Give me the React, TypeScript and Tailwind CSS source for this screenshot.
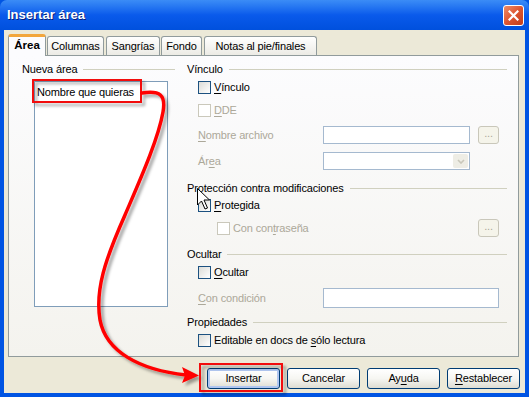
import React from "react";
import { clsx } from "clsx";

function U({ children }: { children: React.ReactNode }) {
  return <span className="underline decoration-1 underline-offset-[2px]">{children}</span>;
}

function Check({ disabled }: { disabled?: boolean }) {
  return (
    <span
      className={clsx(
        "size-[13px] shrink-0 border",
        disabled ? "border-[#cac8bb] bg-white" : "border-[#1c5180] bg-gradient-to-br from-[#dcdcd7] to-white"
      )}
    />
  );
}

function Heading({ children, className }: { children: React.ReactNode; className?: string }) {
  return (
    <div className={clsx("flex h-[14px] items-center gap-[6px]", className)}>
      <span className="whitespace-nowrap leading-none">{children}</span>
      <span className="h-px flex-1 bg-[#d0d0bf]" />
    </div>
  );
}

function Dots() {
  return (
    <div className="flex h-[18px] w-[21px] items-start justify-center rounded-[3px] border border-[#c9c7ba] bg-[#f5f4ea] text-[11px] leading-[12px] text-[#aca899]">
      ...
    </div>
  );
}

function Btn({ children, primary, className }: { children: React.ReactNode; primary?: boolean; className?: string }) {
  return (
    <div
      className={clsx(
        "flex h-[21px] w-[73px] items-center justify-center rounded-[3px] border border-[#003c74] bg-gradient-to-b from-white via-[#f6f6f2] to-[#dedcd2] text-[11px] text-black",
        primary && "shadow-[inset_0_0_0_2px_#b0c6f0]",
        className
      )}
    >
      {children}
    </div>
  );
}

const tabs = [
  { label: "Columnas", w: "w-[57px]", ml: "ml-px" },
  { label: "Sangrías", w: "w-[54px]", ml: "ml-[2px]" },
  { label: "Fondo", w: "w-[41px]", ml: "ml-[1px]" },
  { label: "Notas al pie/finales", w: "w-[113px]", ml: "ml-[2px]" },
];

export default function App() {
  return (
    <div className="relative h-[397px] w-[529px] overflow-hidden bg-[#0054e3] font-['Tahoma','Liberation_Sans',sans-serif] text-[11px] tracking-[-0.15px] text-black">
      <div className="flex h-full flex-col">
        {/* title bar */}
        <div className="flex h-[30px] shrink-0 items-center justify-between rounded-t-[7px] bg-gradient-to-b from-[#3b8cf6] via-[#0a5aeb] to-[#0050dd] pl-[7px] pr-[5px]">
          <span className="text-[13px] font-bold tracking-normal text-white [text-shadow:1px_1px_0_#0a1f7a]">Insertar área</span>
          <div className="flex size-[21px] items-center justify-center rounded-[3px] border border-white bg-gradient-to-br from-[#ec8c68] via-[#dd5530] to-[#c43c18]">
            <svg width="11" height="11" viewBox="0 0 11 11">
              <path d="M1.5 1.5 L9.5 9.5 M9.5 1.5 L1.5 9.5" stroke="white" strokeWidth="2.2" strokeLinecap="square" />
            </svg>
          </div>
        </div>

        {/* body */}
        <div className="mx-[4px] mb-[4px] flex flex-1 flex-col bg-[#ece9d8] pl-[4px] pr-[5px] pt-[4px]">
          {/* tabs */}
          <div className="relative z-10 flex h-[21px] items-end">
            <div className="-mb-px flex h-[22px] w-[38px] items-center justify-center rounded-t-[3px] border-x border-t-[3px] border-x-[#919b9c] border-t-[#f2a63c] bg-[#fcfcfe] pb-[1px] text-[11.5px] font-bold tracking-normal">
              Área
            </div>
            {tabs.map((t) => (
              <div
                key={t.label}
                className={clsx(
                  "flex h-[19px] items-center justify-center rounded-t-[3px] border-x border-t border-[#919b9c] bg-gradient-to-b from-white to-[#ecebe5]",
                  t.w,
                  t.ml
                )}
              >
                {t.label}
              </div>
            ))}
          </div>

          {/* panel */}
          <div className="flex h-[302px] w-[511px] border border-[#919b9c] bg-gradient-to-b from-[#fcfcfe] to-[#f4f3ee] pl-[13px] pr-[11px] pt-[6px]">
            <div className="flex w-[153px] flex-col">
              <Heading>Nueva área</Heading>
              <div className="ml-[12px] mt-[5px] h-[226px] w-[134px] border border-[#7f9db9] bg-white pl-[2px] pt-[3px]">
                <div className="leading-[14px]">Nombre que quieras</div>
              </div>
            </div>

            <div className="ml-[12px] flex w-[320px] flex-col">
              <Heading>Vínculo</Heading>
              <div className="ml-[11px] mt-[4px] flex h-[14px] items-center gap-[3px]">
                <Check />
                <span><U>V</U>ínculo</span>
              </div>
              <div className="ml-[11px] mt-[9px] flex h-[14px] items-center gap-[3px] text-[#aca899]">
                <Check disabled />
                <span><U>D</U>DE</span>
              </div>
              <div className="ml-[11px] mt-[9px] flex h-[18px] items-center text-[#aca899]">
                <span className="w-[125px]"><U>N</U>ombre archivo</span>
                <div className="h-[18px] w-[147px] border border-[#a5b9cf] bg-white" />
                <div className="ml-[8px]"><Dots /></div>
              </div>
              <div className="ml-[11px] mt-[8px] flex h-[18px] items-center text-[#aca899]">
                <span className="w-[125px]">Ár<U>e</U>a</span>
                <div className="flex h-[18px] w-[147px] justify-end border border-[#a5b9cf] bg-white p-px">
                  <div className="flex w-[15px] items-center justify-center rounded-[2px] bg-[#eeede5]">
                    <svg width="8" height="5" viewBox="0 0 8 5">
                      <path d="M1 1 L4 4 L7 1" stroke="#c9c7ba" strokeWidth="1.6" fill="none" />
                    </svg>
                  </div>
                </div>
              </div>

              <Heading className="mt-[11px]">Protección contra modificaciones</Heading>
              <div className="ml-[11px] mt-[3px] flex h-[14px] items-center gap-[3px]">
                <Check />
                <span><U>P</U>rotegida</span>
              </div>
              <div className="ml-[30px] mt-[7px] flex h-[18px] items-center text-[#aca899]">
                <Check disabled />
                <span className="ml-[3px]">Con con<U>t</U>raseña</span>
                <div className="ml-auto mr-[8px]"><Dots /></div>
              </div>

              <Heading className="mt-[10px]">Ocultar</Heading>
              <div className="ml-[11px] mt-[4px] flex h-[14px] items-center gap-[3px]">
                <Check />
                <span><U>O</U>cultar</span>
              </div>
              <div className="ml-[11px] mt-[9px] flex h-[20px] items-center text-[#aca899]">
                <span className="w-[125px]"><U>C</U>on condición</span>
                <div className="h-[20px] w-[176px] border border-[#a5b9cf] bg-white" />
              </div>

              <Heading className="mt-[7px]">Propiedades</Heading>
              <div className="ml-[11px] mt-[4px] flex h-[14px] items-center gap-[3px]">
                <Check />
                <span>Editable en docs de <U>s</U>ólo lectura</span>
              </div>
            </div>
          </div>

          {/* buttons */}
          <div className="mt-[11px] flex justify-end gap-[7px]">
            <Btn primary>Insertar</Btn>
            <Btn>Cancelar</Btn>
            <Btn>Ay<U>u</U>da</Btn>
            <Btn><U>R</U>establecer</Btn>
          </div>
        </div>
      </div>

      {/* annotations */}
      <svg className="pointer-events-none absolute inset-0" width="529" height="397" viewBox="0 0 529 397">
        <defs>
          <filter id="sh" x="-20%" y="-20%" width="140%" height="140%">
            <feDropShadow dx="3" dy="3" stdDeviation="1.8" floodColor="#000" floodOpacity="0.35" />
          </filter>
        </defs>
        <g filter="url(#sh)">
          <rect x="33" y="80" width="108" height="22" fill="none" stroke="#f20d0d" strokeWidth="2" />
          <rect x="200" y="364" width="82" height="27" fill="none" stroke="#f20d0d" strokeWidth="2" />
          <path
            d="M142 93 C160 90 166 95 163 112 C158 140 140 180 125 215 C105 260 95 290 100 320 C106 352 140 370 186 375"
            fill="none"
            stroke="#ff0000"
            strokeWidth="3.5"
            strokeLinecap="round"
          />
          <path d="M199 375.5 L182 367 L185 375.5 L182 383 Z" fill="#ff0000" />
        </g>
        {/* mouse cursor */}
        <path
          d="M197.5 188.5 L197.5 205 L201.5 201 L205 209 L207.5 208 L204 200 L209.5 200 Z"
          fill="white"
          stroke="black"
          strokeWidth="1"
          strokeLinejoin="miter"
        />
      </svg>
    </div>
  );
}
